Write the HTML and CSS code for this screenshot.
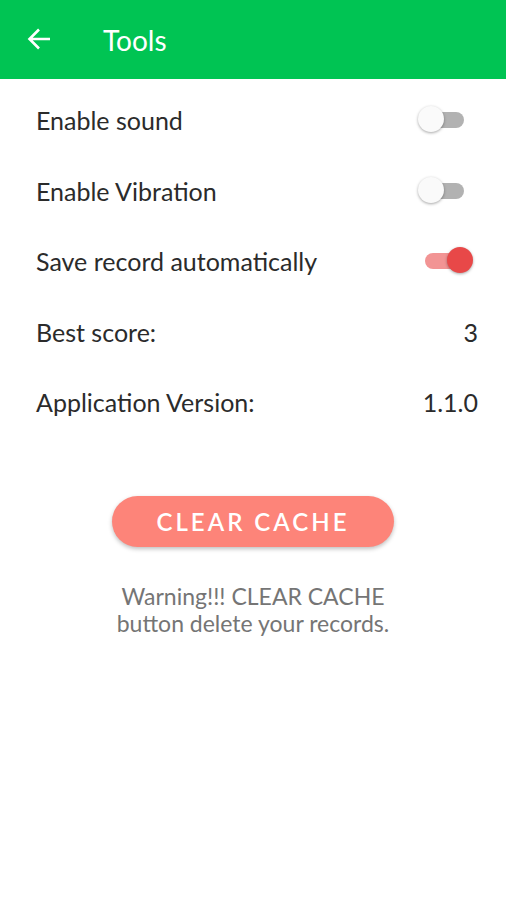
FILE: index.html
```html
<!DOCTYPE html>
<html lang="en">
<head>
  <meta charset="UTF-8">
  <title>Tools</title>
  <link rel="stylesheet" href="styles.css">
</head>
<body>
  <div class="toolbar">
    <svg class="back" width="24" height="24" viewBox="0 0 24 24"><path d="M23 12H2.5M12 2.5L2.5 12l9.5 9.5" fill="none" stroke="#fff" stroke-width="2.6"/></svg>
    <h1>Tools</h1>
  </div>

  <div class="settings">
    <div class="row">
      <span>Enable sound</span>
      <div class="switch"><div class="track"></div><div class="thumb"></div></div>
    </div>
    <div class="row">
      <span>Enable Vibration</span>
      <div class="switch"><div class="track"></div><div class="thumb"></div></div>
    </div>
    <div class="row">
      <span>Save record automatically</span>
      <div class="switch on"><div class="track"></div><div class="thumb"></div></div>
    </div>
    <div class="row">
      <span>Best score:</span>
      <span class="value">3</span>
    </div>
    <div class="row">
      <span>Application Version:</span>
      <span class="value">1.1.0</span>
    </div>
  </div>

  <div class="actions">
    <button class="clear">CLEAR CACHE</button>
    <p class="warning">Warning!!! CLEAR CACHE<br>button delete your records.</p>
  </div>
</body>
</html>
```

FILE: styles.css
```css
body {
  margin: 0;
  font-family: Lato, "Liberation Sans", sans-serif;
  background: #fff;
  color: #2b2b2b;
}
.toolbar {
  height: 79px;
  background: #00c453;
  display: flex;
  align-items: center;
  padding-left: 27px;
  box-sizing: border-box;
}
.toolbar .back {
  margin-top: -2px;
}
.toolbar h1 {
  margin: 0 0 0 52px;
  color: #fff;
  font-size: 28px;
  font-weight: 400;
}
.settings {
  padding: 6px 28px 0 36px;
}
.row {
  height: 70.5px;
  display: flex;
  justify-content: space-between;
  align-items: center;
  font-size: 25px;
}
.switch {
  position: relative;
  width: 56px;
  height: 30px;
  margin-right: 4px;
}
.track {
  position: absolute;
  left: 8px;
  top: 7px;
  width: 38px;
  height: 16px;
  border-radius: 8px;
  background: #b2b2b2;
}
.thumb {
  position: absolute;
  left: 0;
  top: 1px;
  width: 26px;
  height: 26px;
  border-radius: 50%;
  background: #fafafa;
  box-shadow: 0 1px 3px rgba(0, 0, 0, 0.35);
}
.switch.on {
  margin-right: 5px;
}
.switch.on .track {
  background: #f29494;
}
.switch.on .thumb {
  left: 30px;
  background: #e84848;
}
.actions {
  text-align: center;
  padding-top: 58px;
}
.clear {
  width: 282px;
  height: 51px;
  border: none;
  border-radius: 26px;
  background: #fd8479;
  color: #fff;
  font-family: Lato, "Liberation Sans", sans-serif;
  font-size: 24px;
  font-weight: 600;
  letter-spacing: 3px;
  box-shadow: 0 2px 4px rgba(0, 0, 0, 0.25);
}
.warning {
  margin: 36px 0 0;
  color: #757575;
  font-size: 23px;
  line-height: 27px;
}
```
